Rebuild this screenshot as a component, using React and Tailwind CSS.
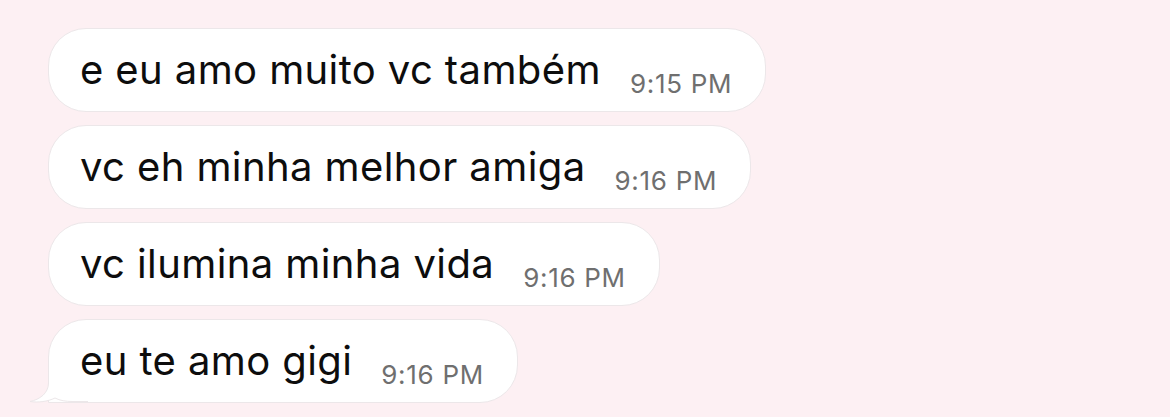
import React from 'react';

const messages = [
    { text: 'e eu amo muito vc também', time: '9:15 PM' },
    { text: 'vc eh minha melhor amiga', time: '9:16 PM' },
    { text: 'vc ilumina minha vida', time: '9:16 PM' },
    { text: 'eu te amo gigi', time: '9:16 PM', tail: true },
];

function Tail() {
    // little curl on the bottom-left of the last bubble
    return (
        <svg className="absolute left-[-21px] bottom-[-1px] w-[60px] h-[40px]" viewBox="0 0 60 40">
            <path d="M20 0 L20.5 20 C20.5 30 12 36.5 2 38.5 C10 39.8 20 38.5 27 35 C32 37.6 38 38.5 44 38.5 L60 38.5 L60 0 Z" fill="#ffffff" />
            <path d="M20.5 0 L20.5 20 C20.5 30 12 36.5 2 38.5 C10 39.8 20 38.5 27 35 C32 37.6 38 38.5 44 38.5 L60 38.5" fill="none" stroke="#ece7e9" strokeWidth="1" />
        </svg>
    );
}

function Bubble({ text, time, tail }) {
    return (
        <div className={`relative w-fit bg-white border border-[#ece7e9] rounded-[38px] ${tail ? 'rounded-bl-none' : ''}`}>
            {tail && <Tail />}
            <div className="relative z-10 flex items-end pl-[31px] pr-[33px] pt-[18px] pb-[18px]">
                <span className="text-[40px] leading-[46px] text-[#0d0d0d] tracking-[0.4px]">{text}</span>
                <span className="ml-[29px] mb-[-4px] text-[26px] leading-[26px] text-[#6f6f6f] tracking-[0.7px] whitespace-nowrap">{time}</span>
            </div>
        </div>
    );
}

export default function App() {
    return (
        <div className="w-[1170px] h-[417px] bg-[#fdf0f3] pt-[28px] pl-[48px] flex flex-col gap-[13px]" style={{ fontFamily: 'Inter, "Noto Sans", sans-serif' }}>
            {messages.map((m, i) => (
                <Bubble key={i} {...m} />
            ))}
        </div>
    );
}
